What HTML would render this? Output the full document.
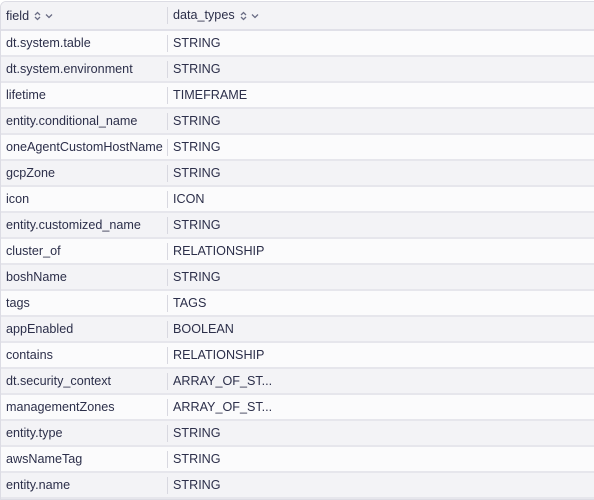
<!DOCTYPE html><html><head><style>
body{margin:0;width:594px;height:498px;overflow:hidden;background:#fff;font-family:"Liberation Sans",sans-serif;font-size:12.6px;color:#2c2f4a}
.t{position:absolute;left:0;top:1px;width:600px;border:1px solid #dcdce4;border-radius:6px 0 0 0;overflow:hidden}
.r{height:24px;display:flex;align-items:center;border-bottom:2px solid #e6e6ec;background:#fbfbfc}
.r.g{background:#f3f3f6}
.h{height:27px;background:#f3f3f6;border-bottom:2px solid #e0e0e8}
.c1{width:161px;padding-left:5px;white-space:nowrap}
.c2{border-left:1px solid #d8d8e0;padding-left:5px;height:17px;line-height:17px;display:flex;align-items:center}
.h .c1{display:flex;align-items:center}
svg{margin-left:5px}
</style></head><body><div class="t">
<div class="r h"><div class="c1">field <svg width="20" height="10" viewBox="0 0 20 10"><path d="M1 4L3.5 1.5L6 4M1 6L3.5 8.5L6 6" fill="none" stroke="#6a6d85" stroke-width="1.3"/><path d="M12 3.5L15 6.5L18 3.5" fill="none" stroke="#6a6d85" stroke-width="1.3"/></svg></div><div class="c2">data_types <svg width="20" height="10" viewBox="0 0 20 10"><path d="M1 4L3.5 1.5L6 4M1 6L3.5 8.5L6 6" fill="none" stroke="#6a6d85" stroke-width="1.3"/><path d="M12 3.5L15 6.5L18 3.5" fill="none" stroke="#6a6d85" stroke-width="1.3"/></svg></div></div>
<div class="r"><div class="c1">dt.system.table</div><div class="c2">STRING</div></div>
<div class="r g"><div class="c1">dt.system.environment</div><div class="c2">STRING</div></div>
<div class="r"><div class="c1">lifetime</div><div class="c2">TIMEFRAME</div></div>
<div class="r g"><div class="c1">entity.conditional_name</div><div class="c2">STRING</div></div>
<div class="r"><div class="c1">oneAgentCustomHostName</div><div class="c2">STRING</div></div>
<div class="r g"><div class="c1">gcpZone</div><div class="c2">STRING</div></div>
<div class="r"><div class="c1">icon</div><div class="c2">ICON</div></div>
<div class="r g"><div class="c1">entity.customized_name</div><div class="c2">STRING</div></div>
<div class="r"><div class="c1">cluster_of</div><div class="c2">RELATIONSHIP</div></div>
<div class="r g"><div class="c1">boshName</div><div class="c2">STRING</div></div>
<div class="r"><div class="c1">tags</div><div class="c2">TAGS</div></div>
<div class="r g"><div class="c1">appEnabled</div><div class="c2">BOOLEAN</div></div>
<div class="r"><div class="c1">contains</div><div class="c2">RELATIONSHIP</div></div>
<div class="r g"><div class="c1">dt.security_context</div><div class="c2">ARRAY_OF_ST...</div></div>
<div class="r"><div class="c1">managementZones</div><div class="c2">ARRAY_OF_ST...</div></div>
<div class="r g"><div class="c1">entity.type</div><div class="c2">STRING</div></div>
<div class="r"><div class="c1">awsNameTag</div><div class="c2">STRING</div></div>
<div class="r g"><div class="c1">entity.name</div><div class="c2">STRING</div></div>
</div></body></html>
